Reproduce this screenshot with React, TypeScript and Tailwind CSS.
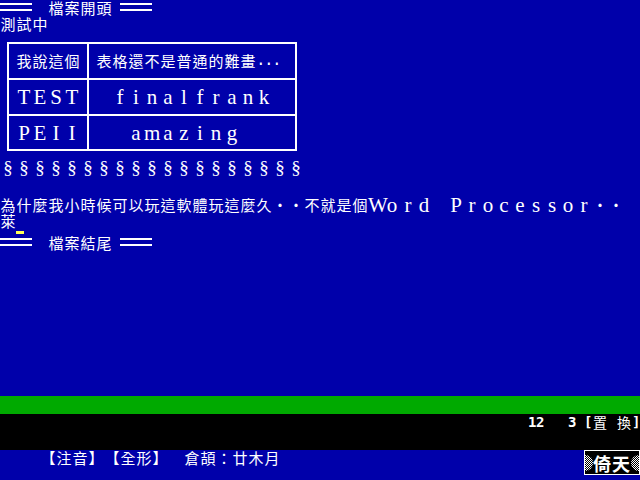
import React from "react";

type Kind = "zh" | "zh14" | "wide" | "half" | "mono" | "sect";

const CLS: Record<Kind, string> = {
  zh: "w-[16px] text-[15px] font-['Noto_Sans_CJK_TC',sans-serif]",
  zh14: "w-[16px] text-[14px] font-['Noto_Sans_CJK_TC',sans-serif]",
  wide: "w-[16px] text-[21px] font-['Liberation_Serif',serif]",
  half: "w-[8px] text-[16px] font-['Liberation_Mono',monospace]",
  mono: "w-[8px] text-[14px] font-bold font-['DejaVu_Sans_Mono',monospace]",
  sect: "w-[16px] text-[19px] font-['Liberation_Serif',serif]",
};

function C({ t, k }: { t: string; k: Kind }) {
  return (
    <>
      {Array.from(t).map((ch, i) => (
        <span
          key={i}
          className={`inline-block shrink-0 h-[16px] leading-[16px] text-center whitespace-pre ${CLS[k]}`}
        >
          {ch}
        </span>
      ))}
    </>
  );
}

function DoubleLine() {
  return (
    <div className="w-[32px] h-[16px] flex flex-col pt-[3px] gap-[4px] shrink-0">
      <div className="h-[2px] bg-white" />
      <div className="h-[2px] bg-white" />
    </div>
  );
}

function Banner({ text }: { text: string }) {
  return (
    <div className="flex h-[16px]">
      <DoubleLine />
      <div className="w-[16px] shrink-0" />
      <C t={text} k="zh" />
      <div className="w-[8px] shrink-0" />
      <DoubleLine />
    </div>
  );
}

function Dither({ side }: { side: "l" | "r" }) {
  const id = side === "l" ? "chkL" : "chkR";
  return (
    <svg width="8" height="20" viewBox="0 0 8 20" className="shrink-0">
      <defs>
        <pattern id={id} width="2" height="2" patternUnits="userSpaceOnUse">
          <rect width="1" height="1" fill="#fff" />
          <rect x="1" y="1" width="1" height="1" fill="#fff" />
        </pattern>
      </defs>
      {side === "l" ? (
        <path d="M0 2 A8 8 0 0 1 0 18 Z" fill={`url(#${id})`} />
      ) : (
        <path d="M8 2 A8 8 0 0 0 8 18 Z" fill={`url(#${id})`} />
      )}
    </svg>
  );
}

export default function App() {
  return (
    <div className="w-[640px] h-[480px] bg-[#0000aa] text-white flex flex-col overflow-hidden">
      <div className="flex-1 flex flex-col">
        <Banner text="檔案開頭" />
        <div className="flex h-[16px]">
          <C t="測試中" k="zh" />
        </div>

        <div className="ml-[7px] mt-[10px] w-[290px] grid grid-cols-[78px_206px] grid-rows-[34px_34px_33px] gap-[2px] p-[2px] bg-white">
          <div className="bg-[#0000aa] flex items-center pl-[7px]">
            <C t="我說這個" k="zh" />
          </div>
          <div className="bg-[#0000aa] flex items-center pl-[7px]">
            <C t="表格還不是普通的難畫" k="zh" />
            <C t="..." k="half" />
          </div>
          <div className="bg-[#0000aa] flex items-center pl-[7px]">
            <C t="TEST" k="wide" />
          </div>
          <div className="bg-[#0000aa] flex items-center pl-[23px]">
            <C t="finalfrank" k="wide" />
          </div>
          <div className="bg-[#0000aa] flex items-center pl-[7px]">
            <C t="PEII" k="wide" />
          </div>
          <div className="bg-[#0000aa] flex items-center pl-[39px]">
            <C t="amazing" k="wide" />
          </div>
        </div>

        <div className="flex h-[16px] mt-[9px]">
          <C t="§§§§§§§§§§§§§§§§§§§" k="sect" />
        </div>

        <div className="flex h-[16px] mt-[21px]">
          <C t="為什麼我小時候可以玩這軟體玩這麼久‧‧不就是個" k="zh" />
          <C t="Word Processor" k="wide" />
          <C t="‧‧" k="zh" />
        </div>
        <div className="flex h-[16px]">
          <C t="萊" k="zh" />
        </div>
        <div className="ml-[16px] mt-[2px] h-[3px] w-[8px] bg-[#ffff55]" />
        <div className="mt-[1px]">
          <Banner text="檔案結尾" />
        </div>
      </div>

      <div className="h-[18px] bg-[#00aa00] shrink-0" />

      <div className="h-[36px] bg-black shrink-0">
        <div className="flex h-[16px] justify-end">
          <C t="12   3 [" k="mono" />
          <C t="置" k="zh14" />
          <C t=" " k="mono" />
          <C t="換" k="zh14" />
          <C t="]" k="mono" />
        </div>
      </div>

      <div className="h-[30px] shrink-0 flex justify-between items-start">
        <div className="flex h-[16px] pl-[40px]">
          <C t="【注音】【全形】 倉頡：廿木月" k="zh" />
        </div>
        <div className="w-[56px] h-[25px] border border-white bg-black flex items-center">
          <Dither side="l" />
          <span className="text-[18px] leading-[20px] font-bold tracking-[1px] font-['Noto_Sans_CJK_TC',sans-serif] whitespace-nowrap">
            倚天
          </span>
          <div className="ml-auto flex">
            <Dither side="r" />
          </div>
        </div>
      </div>
    </div>
  );
}
